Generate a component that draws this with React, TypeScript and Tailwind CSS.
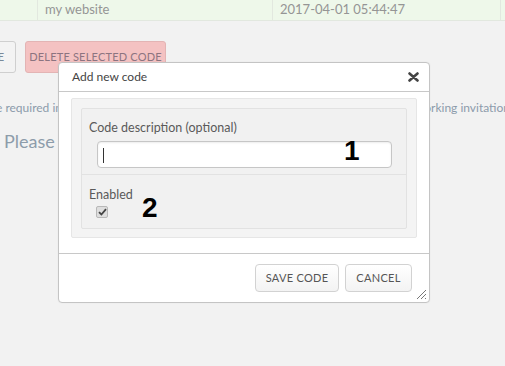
import React from "react";

export default function App() {
  const font = { fontFamily: "Lato, 'Open Sans', sans-serif" };
  const arial = { fontFamily: "'Liberation Sans', Arial, sans-serif" };
  return (
    <div className="relative w-[505px] h-[366px] overflow-hidden bg-[#f2f2f2]" style={font}>
      {/* table row */}
      <div className="flex h-[21px] bg-[#eef8ea] border-b border-[#e2e8df] text-[13px] text-[#959595]">
        <div className="w-[38px] border-r border-[#e2e8df]" />
        <div className="w-[235px] border-r border-[#e2e8df] pl-[7px] leading-[19px]">my website</div>
        <div className="w-[228px] border-r border-[#e2e8df] pl-[7px] leading-[19px]">2017-04-01 05:44:47</div>
      </div>
      {/* buttons row */}
      <div className="flex mt-[20px] gap-[9px] ml-[-40px]">
        <div className="w-[56px] h-[32px] rounded-[3px] border border-[#cfcfcf] bg-[#f3f3f3] text-[11px] text-[#7a8a99] flex items-center justify-end pr-[11px]">E</div>
        <div className="w-[141px] h-[32px] rounded-[3px] border border-[#e3b4b4] bg-[#f4c2c2] text-[11px] text-[#8c7480] flex items-center justify-center tracking-[0.2px]">DELETE SELECTED CODE</div>
      </div>
      {/* info text */}
      <div className="flex justify-between mt-[28px] text-[12px] text-[#8c9bab] leading-[14px]">
        <span className="ml-[-4px]">e required in</span>
        <span className="mr-[-5px]">orking invitation</span>
      </div>
      <div className="mt-[15px] ml-[4px] text-[18px] text-[#8d9caa] leading-[22px]">Please</div>

      {/* modal */}
      <div className="absolute left-[58px] top-[62px] w-[372px] h-[241px] bg-white border border-[#c4c4c4] rounded-[4px] flex flex-col shadow-[0_0_2px_rgba(0,0,0,0.05)]">
        <div className="h-[29px] border-b border-[#c8c8c8] flex items-center justify-between pl-[13px] pr-[10px] text-[12px] text-[#444]">
          <span>Add new code</span>
          <svg width="11" height="10" viewBox="0 0 11 10">
            <path d="M1.5 1.5 L9.5 8.5 M9.5 1.5 L1.5 8.5" stroke="#444" strokeWidth="2.6" strokeLinecap="round" />
          </svg>
        </div>
        <div className="pt-[6px] px-[12px] h-[161px]">
          <div className="bg-[#f4f4f4] border border-[#e6e6e6] rounded-[2px] p-[9px] pb-[8px]">
            <div className="bg-[#f1f1f1] border border-[#e2e2e2] rounded-[2px]">
              <div className="px-[7px] pt-[11px] pb-[6px] border-b border-[#e2e2e2]">
                <div className="text-[12.5px] text-[#5a5a5a] leading-[16px]">Code description (optional)</div>
                <div className="relative mt-[5px] ml-[8px] w-[295px] h-[27px] bg-white border border-[#c6c6c6] rounded-[4px] shadow-[inset_0_1px_2px_rgba(0,0,0,0.08)]">
                  <div className="absolute left-[5px] top-[6px] w-px h-[15px] bg-[#333]" />
                  <span className="absolute left-[246px] top-[-7px] text-[28px] font-bold text-black leading-[32px]" style={arial}>1</span>
                </div>
              </div>
              <div className="px-[7px] pt-[12px] pb-[8px] relative h-[53px]">
                <div className="text-[12.5px] text-[#5a5a5a] leading-[16px]">Enabled</div>
                <div className="mt-[3px] ml-[7px] w-[12px] h-[12px] rounded-[2px] border border-[#b8b8b8] bg-[#dedede] flex items-center justify-center">
                  <svg width="9" height="8" viewBox="0 0 9 8">
                    <path d="M1 4.2 L3.4 6.5 L8 1.2" stroke="#444" strokeWidth="1.8" fill="none" />
                  </svg>
                </div>
                <span className="absolute left-[60px] top-[17px] text-[28px] font-bold text-black leading-[32px]" style={arial}>2</span>
              </div>
            </div>
          </div>
        </div>
        <div className="flex-1 border-t border-[#c8c8c8] relative flex justify-end items-start pt-[10px] pr-[17px] gap-[6px]">
          <button className="w-[84px] h-[28px] rounded-[4px] border border-[#d2d2d2] bg-gradient-to-b from-white to-[#f3f3f3] text-[11px] text-[#555] tracking-[0.3px]">SAVE CODE</button>
          <button className="w-[67px] h-[28px] rounded-[4px] border border-[#d2d2d2] bg-gradient-to-b from-white to-[#f3f3f3] text-[11px] text-[#555] tracking-[0.3px]">CANCEL</button>
          <svg className="absolute right-[2px] bottom-[2px]" width="12" height="12" viewBox="0 0 12 12">
            <path d="M11 2 L2 11 M11 6 L6 11 M11 10 L10 11" stroke="#777" strokeWidth="1" />
          </svg>
        </div>
      </div>
    </div>
  );
}
